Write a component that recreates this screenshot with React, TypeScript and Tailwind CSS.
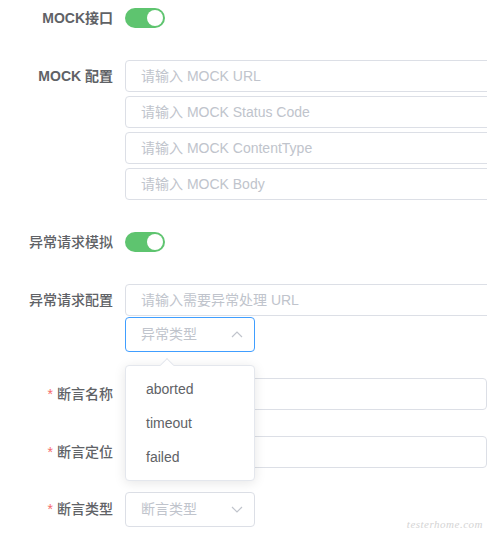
const font = { fontFamily: '"Liberation Sans", "Noto Sans CJK SC", sans-serif' };

function Switch() {
  return (
    <div className="w-[40px] h-[20px] rounded-full bg-[#5ec46f] flex items-center justify-end px-[2px]">
      <div className="w-[16px] h-[16px] rounded-full bg-white" />
    </div>
  );
}

function Label({ text, bold, required }: { text: string; bold?: boolean; required?: boolean }) {
  return (
    <div className={`w-[113px] shrink-0 text-right text-[14px] text-[#606266] ${bold ? 'font-bold' : 'font-medium'}`}>
      {required && <span className="text-[#f56c6c] mr-[4px]">*</span>}
      {text}
    </div>
  );
}

function Input({ ph }: { ph: string }) {
  return (
    <div className="h-[32px] w-[420px] rounded-[4px] border border-[#dcdfe6] bg-white flex items-center pl-[15px] text-[14px] text-[#c0c4cc]">{ph}</div>
  );
}

function Chevron({ up }: { up?: boolean }) {
  return (
    <svg width="12" height="7" viewBox="0 0 12 7" fill="none" stroke="#c0c4cc" strokeWidth="1.2">
      {up ? <polyline points="1,6 6,1 11,6" /> : <polyline points="1,1 6,6 11,1" />}
    </svg>
  );
}

function Select({ ph, open }: { ph: string; open?: boolean }) {
  return (
    <div className={`h-[35px] w-[130px] rounded-[4px] border bg-white flex items-center justify-between pl-[15px] pr-[11px] text-[14px] text-[#c0c4cc] ${open ? 'border-[#409eff]' : 'border-[#dcdfe6]'}`}>
      <span>{ph}</span>
      <Chevron up={open} />
    </div>
  );
}

export default function App() {
  return (
    <div className="relative w-[487px] h-[540px] overflow-hidden bg-white" style={font}>
      <div className="flex items-center gap-[12px] h-[36px]">
        <Label text="MOCK接口" bold />
        <Switch />
      </div>

      <div className="flex gap-[12px] mt-[24px]">
        <div className="h-[32px] flex items-center"><Label text="MOCK 配置" bold /></div>
        <div className="flex flex-col gap-[4px]">
          <Input ph="请输入 MOCK URL" />
          <Input ph="请输入 MOCK Status Code" />
          <Input ph="请输入 MOCK ContentType" />
          <Input ph="请输入 MOCK Body" />
        </div>
      </div>

      <div className="flex items-center gap-[12px] h-[36px] mt-[24px]">
        <Label text="异常请求模拟" />
        <Switch />
      </div>

      <div className="flex gap-[12px] mt-[24px]">
        <div className="h-[32px] flex items-center"><Label text="异常请求配置" /></div>
        <div className="relative flex flex-col gap-[1px]">
          <Input ph="请输入需要异常处理 URL" />
          <Select ph="异常类型" open />
          <div className="absolute left-0 top-[81px] z-10 w-[130px] rounded-[4px] border border-[#e4e7ed] bg-white py-[6px] shadow-[0_2px_12px_0_rgba(0,0,0,0.1)]">
            <div className="absolute -top-[6px] left-[36px] w-[10px] h-[10px] rotate-45 bg-white border-l border-t border-[#e4e7ed]" />
            {['aborted', 'timeout', 'failed'].map((o) => (
              <div key={o} className="h-[34px] flex items-center pl-[20px] text-[14px] text-[#606266]">{o}</div>
            ))}
          </div>
        </div>
      </div>

      <div className="flex items-center gap-[12px] mt-[26px]">
        <Label text="断言名称" required />
        <Input ph="" />
      </div>

      <div className="flex items-center gap-[12px] mt-[26px]">
        <Label text="断言定位" required />
        <Input ph="" />
      </div>

      <div className="flex items-center gap-[12px] mt-[24px]">
        <Label text="断言类型" required />
        <Select ph="断言类型" />
      </div>

      <div className="absolute right-[4px] bottom-[8px] text-[11px] italic font-light tracking-[0.5px] text-[#d4d4d4]" style={{ fontFamily: '"Liberation Serif", serif' }}>testerhome.com</div>
    </div>
  );
}
